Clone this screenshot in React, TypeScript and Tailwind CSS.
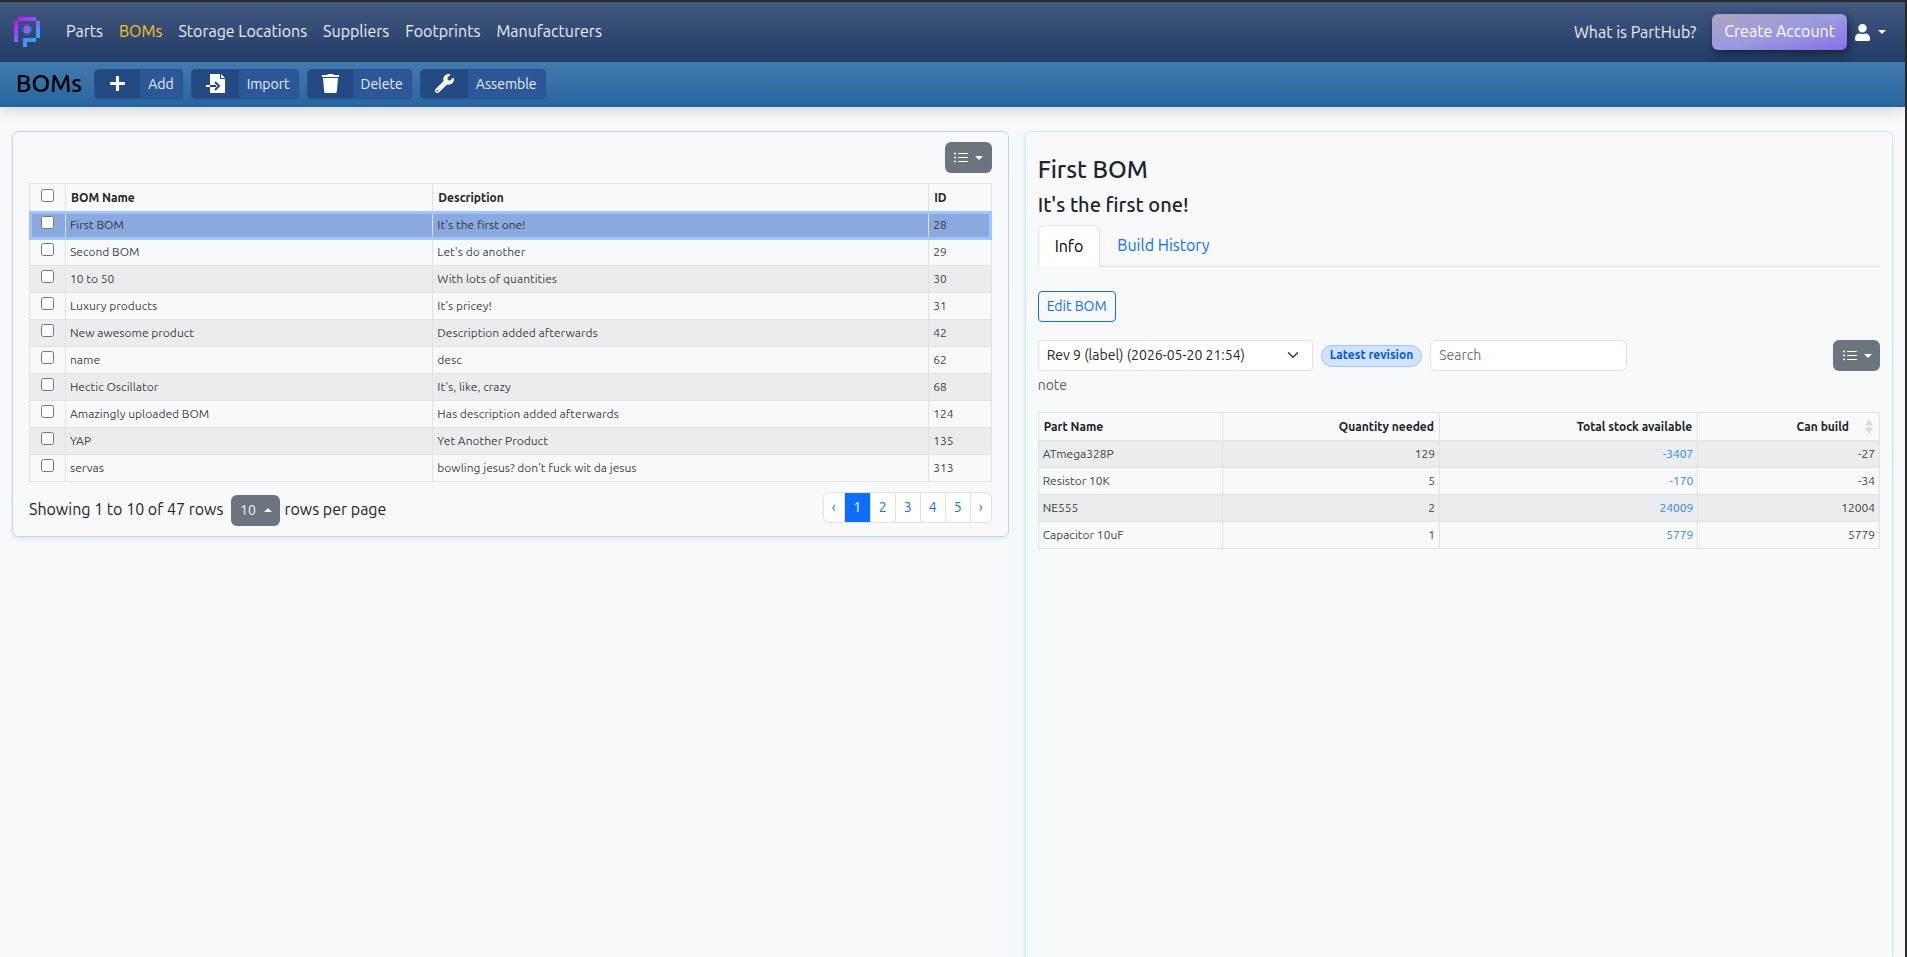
import { useState } from "react";
import type { ReactNode } from "react";
import { FaPlus, FaUser, FaWrench } from "react-icons/fa";
import { BsListUl } from "react-icons/bs";

const navItems = ["Parts", "BOMs", "Storage Locations", "Suppliers", "Footprints", "Manufacturers"];

const boms = [
  { name: "First BOM", description: "It's the first one!", id: 28 },
  { name: "Second BOM", description: "Let's do another", id: 29 },
  { name: "10 to 50", description: "With lots of quantities", id: 30 },
  { name: "Luxury products", description: "It's pricey!", id: 31 },
  { name: "New awesome product", description: "Description added afterwards", id: 42 },
  { name: "name", description: "desc", id: 62 },
  { name: "Hectic Oscillator", description: "It's, like, crazy", id: 68 },
  { name: "Amazingly uploaded BOM", description: "Has description added afterwards", id: 124 },
  { name: "YAP", description: "Yet Another Product", id: 135 },
  { name: "servas", description: "bowling jesus? don't fuck wit da jesus", id: 313 },
];

const parts = [
  { name: "ATmega328P", needed: 129, stock: -3407, build: -27 },
  { name: "Resistor 10K", needed: 5, stock: -170, build: -34 },
  { name: "NE555", needed: 2, stock: 24009, build: 12004 },
  { name: "Capacitor 10uF", needed: 1, stock: 5779, build: 5779 },
];

function Logo() {
  return (
    <svg viewBox="0 0 26 30" className="h-[30px] w-[26px]" shapeRendering="crispEdges" aria-hidden="true">
      <defs>
        <linearGradient id="logo" gradientUnits="userSpaceOnUse" x1="2" y1="0" x2="24" y2="24">
          <stop offset="0" stopColor="#d400ff" />
          <stop offset="0.55" stopColor="#7a6cff" />
          <stop offset="1" stopColor="#17b8ff" />
        </linearGradient>
      </defs>
      <g fill="url(#logo)">
        <path d="M4 0h18v4H4zM0 4h4v21H0zM22 4h4v17h-4zM9 21h13v4h-9v5H9z" />
        <path d="M10 9h6v7h-6z" />
        <path opacity="0.45" d="M8 10h2v5H8zM16 10h2v5h-2zM11 7h4v2h-4zM11 16h4v2h-4z" />
      </g>
    </svg>
  );
}

function ImportIcon() {
  return (
    <svg viewBox="0 0 19 19" className="size-[19px]" aria-hidden="true">
      <path d="M4 0h10v5h5v14H4z" fill="currentColor" />
      <path d="M15 0l4 4h-4z" fill="currentColor" />
      <path d="M4 12h6M9 8l4 4-4 4" fill="none" stroke="#244a82" strokeWidth="2" />
      <path d="M0 11h4v2H0z" fill="currentColor" />
    </svg>
  );
}

function TrashIcon() {
  return (
    <svg viewBox="0 0 17 19" className="h-[19px] w-[17px] fill-current" aria-hidden="true">
      <path d="M6 0h5l1 1h5v2H0V1h5zM1 4h15l-1.200 13.500q-.1 1.500-1.600 1.500H3.800q-1.500 0-1.600-1.500z" />
    </svg>
  );
}

function Caret({ up = false }: { up?: boolean }) {
  return (
    <svg viewBox="0 0 8 4" className="h-1 w-2 fill-current" aria-hidden="true">
      <path d={up ? "M0 4h8L4 0z" : "M0 0h8L4 4z"} />
    </svg>
  );
}

function ToolButton({ icon, label }: { icon: ReactNode; label: string }) {
  return (
    <button className="flex h-[30px] items-stretch overflow-hidden rounded border border-[#27508f] bg-[#2c5899] text-sm text-white/90">
      <span className="flex items-center justify-center bg-[#244a82] px-[14px] text-white">{icon}</span>
      <span className="flex items-center px-2">{label}</span>
    </button>
  );
}

function ColumnsButton() {
  return (
    <button aria-label="Columns" className="flex h-[31px] w-[47px] items-center justify-center gap-1.5 rounded-md bg-[#6c757d] text-white">
      <BsListUl className="size-4" />
      <Caret />
    </button>
  );
}

function SortIcon() {
  return (
    <svg viewBox="0 0 8 15" className="h-[15px] w-2 fill-[#d9dadb]" aria-hidden="true">
      <path d="M0 6.500h8L4 0zM0 8.500h8L4 15z" />
    </svg>
  );
}

const headCell = "border border-[#dee2e6] px-[5px] font-bold";
const bodyCell = "border border-[#dee2e6] px-1";

function BomTable() {
  const [checked, setChecked] = useState<number[]>([]);
  const toggle = (id: number) =>
    setChecked((ids) => (ids.includes(id) ? ids.filter((i) => i !== id) : [...ids, id]));
  const all = checked.length === boms.length;
  return (
    <table className="w-full table-fixed border-collapse text-left text-xs text-[#212529]/90">
      <colgroup>
        <col className="w-9" />
        <col className="w-[38.2%]" />
        <col />
        <col className="w-[6.5%]" />
      </colgroup>
      <thead>
        <tr className="h-7 text-[#212529]">
          <th className={headCell}>
            <input
              type="checkbox"
              aria-label="Select all"
              checked={all}
              onChange={() => setChecked(all ? [] : boms.map((b) => b.id))}
              className="mx-auto -mt-1 block size-[13px]"
            />
          </th>
          <th className={headCell}>BOM Name</th>
          <th className={headCell}>Description</th>
          <th className={headCell}>ID</th>
        </tr>
      </thead>
      <tbody>
        {boms.map((b, i) => (
          <tr
            key={b.id}
            className={
              i === 0
                ? "h-[27px] bg-[#89a9df] outline-3 -outline-offset-2 outline-[#9ec5fe]"
                : "h-[27px] odd:bg-[#ebecee]"
            }
          >
            <td className={bodyCell}>
              <input
                type="checkbox"
                aria-label={`Select ${b.name}`}
                checked={checked.includes(b.id)}
                onChange={() => toggle(b.id)}
                className="mx-auto -mt-1.5 block size-[13px]"
              />
            </td>
            <td className={bodyCell}>{b.name}</td>
            <td className={bodyCell}>{b.description}</td>
            <td className={bodyCell}>{b.id}</td>
          </tr>
        ))}
      </tbody>
    </table>
  );
}

function PartsTable() {
  return (
    <table className="mt-[17px] w-full table-fixed border-collapse text-right text-xs text-[#212529]/90">
      <colgroup>
        <col className="w-[21.9%]" />
        <col className="w-[25.8%]" />
        <col className="w-[30.7%]" />
        <col />
      </colgroup>
      <thead>
        <tr className="h-7 text-[#212529]">
          <th className={`${headCell} text-left`}>Part Name</th>
          <th className={headCell}>Quantity needed</th>
          <th className={headCell}>Total stock available</th>
          <th className={headCell}>
            <span className="flex items-center justify-end gap-4 pr-px">
              Can build
              <SortIcon />
            </span>
          </th>
        </tr>
      </thead>
      <tbody>
        {parts.map((p) => (
          <tr key={p.name} className="h-[27px] odd:bg-[#ebecee]">
            <td className={`${bodyCell} text-left`}>{p.name}</td>
            <td className={bodyCell}>{p.needed}</td>
            <td className={bodyCell}>
              <a href="#stock" className="text-[#2a80f8]">{p.stock}</a>
            </td>
            <td className={bodyCell}>{p.build}</td>
          </tr>
        ))}
      </tbody>
    </table>
  );
}

export default function App() {
  return (
    <div className="flex min-h-screen flex-col border-t-2 border-r-2 border-[#2b2b2b] bg-[#f8f9fb] font-['Ubuntu','Open_Sans',sans-serif] text-[#212529]">
      <header className="shadow-[0_4px_12px_rgba(0,0,0,0.15)]">
        <div className="flex h-[60px] items-center justify-between bg-linear-to-b from-[#425a80] to-[#203c66] pr-[19px] pl-[14px] text-white/90">
          <nav className="flex items-center gap-4">
            <a href="#home" aria-label="PartHub" className="mr-[10px]">
              <Logo />
            </a>
            {navItems.map((item) => (
              <a key={item} href="#nav" className={item === "BOMs" ? "pb-0.5 text-[#f9c513]" : "pb-0.5"}>
                {item}
              </a>
            ))}
          </nav>
          <div className="flex items-center">
            <a href="#about" className="mr-4">What is PartHub?</a>
            <button className="mr-2 h-9 rounded-md bg-[linear-gradient(to_bottom_right,#b0a3bf_0%,#9a9be0_50%,#8570e8_100%)] px-3 pb-0.5 text-white shadow-[2px_3px_8px_rgba(0,0,0,0.5)]">
              Create Account
            </button>
            <button aria-label="Account" className="flex items-center gap-2 text-white">
              <FaUser className="h-[17px] w-[15px]" />
              <Caret />
            </button>
          </div>
        </div>
        <div className="flex h-[45px] items-center gap-2 bg-linear-to-b from-[#447aae] to-[#26659f] pb-0.5 pl-4">
          <h1 className="mr-1 text-2xl font-medium text-black">BOMs</h1>
          <ToolButton icon={<FaPlus className="size-[17px]" />} label="Add" />
          <ToolButton icon={<ImportIcon />} label="Import" />
          <ToolButton icon={<TrashIcon />} label="Delete" />
          <ToolButton icon={<FaWrench className="size-[19px]" />} label="Assemble" />
        </div>
      </header>

      <main className="flex grow items-stretch pt-6">
        <div className="w-[calc(53%-1px)] shrink-0 pl-3">
          <section className="rounded-md border border-[#b9d3fb] px-4 pt-[10px] pb-2 shadow-[0_2px_4px_rgba(0,0,0,0.08)]">
            <div className="mb-[10px] flex justify-end">
              <ColumnsButton />
            </div>
            <BomTable />
            <div className="mt-[10px] flex items-start justify-between">
              <div className="flex h-9 items-center">
                <span className="mr-2 pb-0.5">Showing 1 to 10 of 47 rows</span>
                <button className="mr-1 flex h-[31px] w-[49px] items-center justify-center gap-2 rounded-md bg-[#6c757d] text-sm text-white/90">
                  10
                  <Caret up />
                </button>
                <span className="pb-0.5">rows per page</span>
              </div>
              <nav aria-label="Pages" className="flex h-[31px] divide-x divide-[#dee2e6] overflow-hidden rounded-md border border-[#dee2e6] bg-white text-sm text-[#0d6efd]">
                <a href="#prev" className="flex w-[21px] items-center justify-center pb-0.5">‹</a>
                <a href="#1" className="flex w-[26px] items-center justify-center bg-[#0d6efd] pb-0.5 text-white">1</a>
                {[2, 3, 4, 5].map((n) => (
                  <a key={n} href="#page" className="flex w-[25px] items-center justify-center pb-0.5">{n}</a>
                ))}
                <a href="#next" className="flex w-5 items-center justify-center pb-0.5">›</a>
              </nav>
            </div>
          </section>
        </div>

        <div className="w-4 shrink-0 bg-[#f4f8fb]" />

        <section className="mr-3 flex grow flex-col rounded-t-md border border-b-0 border-[#b6effb] px-3 pt-[22px] shadow-[0_2px_4px_rgba(0,0,0,0.06)]">
          <h2 className="text-2xl leading-8 font-medium">First BOM</h2>
          <h3 className="mt-[3px] text-xl leading-8 font-medium">It's the first one!</h3>
          <div className="mt-1 flex border-b border-[#dee2e6]">
            <button className="-mb-px h-[42px] rounded-t-md border border-b-0 border-[#dee2e6] bg-white px-4 pb-0.5 text-black">
              Info
            </button>
            <button className="h-[41px] px-[17px] pb-0.5 text-[#0d6efd]">Build History</button>
          </div>
          <button className="mt-6 h-[31px] self-start rounded border border-[#0d6efd] px-2 pb-0.5 text-sm text-[#0d6efd]">
            Edit BOM
          </button>
          <div className="mt-[18px] flex items-center gap-2 text-sm">
            <div className="relative w-[275px]">
              <select aria-label="Revision" className="h-[31px] w-full appearance-none rounded border border-[#dee2e6] bg-white px-2 pb-0.5">
                <option>Rev 9 (label) (2026-05-20 21:54)</option>
              </select>
              <svg viewBox="0 0 16 16" className="pointer-events-none absolute top-[9px] right-[14px] size-3" aria-hidden="true">
                <path d="m2 5 6 6 6-6" fill="none" stroke="#343a40" strokeWidth="2" strokeLinecap="round" strokeLinejoin="round" />
              </svg>
            </div>
            <span className="flex h-[22px] items-center rounded-full border border-[#9ec5fe] bg-[#cfe2ff] px-2 pb-0.5 text-xs font-bold text-[#0a58ca]">
              Latest revision
            </span>
            <input aria-label="Search" placeholder="Search" className="h-[31px] w-[197px] rounded-md border border-[#dee2e6] bg-white px-2 pb-0.5 placeholder:text-[#6c757d]" />
            <div className="ml-auto">
              <ColumnsButton />
            </div>
          </div>
          <p className="mt-1 text-sm text-[#5b6167]">note</p>
          <PartsTable />
        </section>
      </main>
    </div>
  );
}
